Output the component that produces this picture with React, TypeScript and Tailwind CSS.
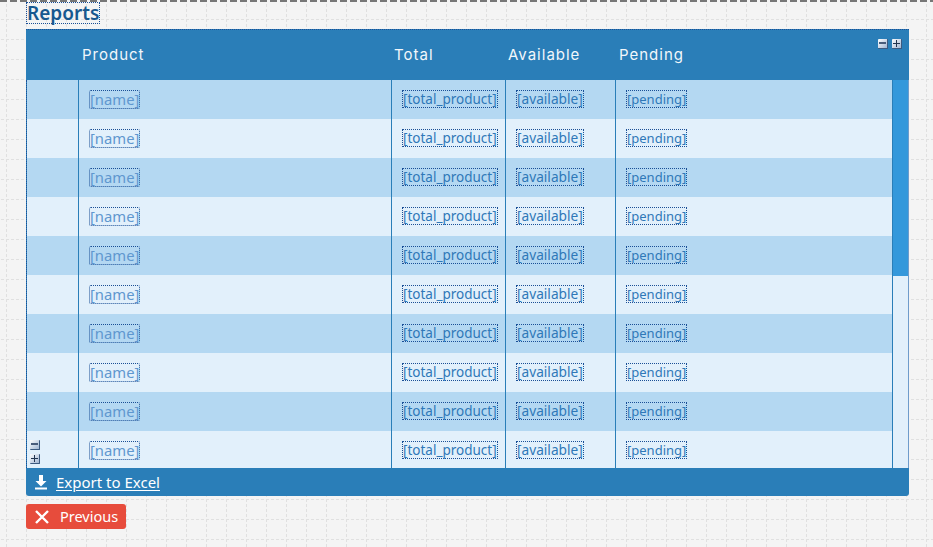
const ROWS = Array.from({ length: 10 }, (_, i) => i);

function GridBackground() {
  return (
    <svg className="absolute inset-0 h-full w-full" aria-hidden="true">
      <defs>
        <pattern id="grid" x="6" y="-1" width="20" height="20" patternUnits="userSpaceOnUse">
          <path d="M0 0H20" stroke="#e0e0e0" strokeWidth="1" strokeDasharray="3 2" transform="translate(0 .5)" />
          <path d="M0 0V20" stroke="#e0e0e0" strokeWidth="1" strokeDasharray="3 2" transform="translate(.5 0)" />
        </pattern>
      </defs>
      <rect width="100%" height="100%" fill="url(#grid)" />
    </svg>
  );
}

function Tool({ plus }: { plus?: boolean }) {
  return (
    <span className="relative block h-[10px] w-[10px] rounded-[1px] border-r border-b border-[#3d5a80] bg-gradient-to-br from-white to-[#a3b6d2]">
      {plus ? (
        <>
          <span className="absolute left-[1px] right-[1px] top-[4px] h-[1px] bg-[#22344f]" />
          <span className="absolute top-[1px] bottom-[1px] left-[4px] w-[1px] bg-[#22344f]" />
        </>
      ) : (
        <span className="absolute left-[1px] right-[1px] top-[3px] h-[2px] bg-[#4a5c7a]" />
      )}
    </span>
  );
}

function Field({ text, className }: { text: string; className: string }) {
  return <span className={`inline-block border border-dotted border-[#1a4f96] ${className}`}>{text}</span>;
}

export default function App() {
  return (
    <div className="relative h-[547px] w-[933px] overflow-hidden bg-[#f4f4f4] font-['Noto_Sans',sans-serif]">
      <GridBackground />
      <div className="relative">
        <div className="h-[2px] bg-[repeating-linear-gradient(90deg,#777_0_7px,transparent_7px_10px)]" />
        <div className="pl-[26px]">
          <h1 className="h-[22px] w-[74px] border border-dotted border-[#1a4f96] text-center text-[19px] font-semibold leading-[20px] text-[#17588f]">
            Reports
          </h1>

          <div className="mt-[5px] w-[883px] rounded-b-[3px] border-t border-dotted border-t-[#1a4f96] bg-[#2a7eb8]">
            <div className="relative flex h-[50px] items-center pt-[1px] font-['Inter',sans-serif] text-[15px] tracking-[1px] text-[#f2f7fb]">
              <span className="ml-[56px] w-[312px]">Product</span>
              <span className="w-[114px]">Total</span>
              <span className="w-[111px]">Available</span>
              <span>Pending</span>
              <div className="absolute right-[7px] top-[9px] flex gap-[4px]">
                <Tool />
                <Tool plus />
              </div>
            </div>

            <div className="flex h-[388px] overflow-hidden border-x border-l-[#1a4f96] border-r-[#6f9ccb] [border-style:none_solid_none_dotted]">
              <div className="min-w-0 flex-1 overflow-hidden">
                {ROWS.map((i) => (
                  <div key={i} className={`flex h-[39px] shrink-0 ${i % 2 === 0 ? "bg-[#b4d8f2]" : "bg-[#e2f0fb]"}`}>
                    <div className="relative w-[52px] shrink-0 border-r border-[#2a7eb8]">
                      {i === 9 && (
                        <div className="absolute left-[3px] top-[9px] flex flex-col gap-[4px]">
                          <Tool />
                          <Tool plus />
                        </div>
                      )}
                    </div>
                    <div className="flex w-[313px] shrink-0 items-start border-r border-[#2a7eb8] pl-[10px] pt-[10px]">
                      <Field text="[name]" className="h-[19px] rounded-[2px] text-[14.8px] leading-[17px] text-[#5f97cf]" />
                    </div>
                    <div className="flex w-[114px] shrink-0 items-start border-r border-[#2a7eb8] pl-[10px] pt-[10px]">
                      <Field text="[total_product]" className="h-[18px] text-[13.5px] leading-[16px] text-[#2f78b8]" />
                    </div>
                    <div className="flex w-[110px] shrink-0 items-start border-r border-[#2a7eb8] pl-[10px] pt-[10px]">
                      <Field text="[available]" className="h-[18px] text-[13.7px] leading-[16px] text-[#2f78b8]" />
                    </div>
                    <div className="flex flex-1 items-start pl-[10px] pt-[10px]">
                      <Field text="[pending]" className="h-[18px] text-[13px] leading-[16px] text-[#2f78b8]" />
                    </div>
                  </div>
                ))}
              </div>
              <div className="w-[16px] shrink-0 border-l border-[#2a7eb8] bg-[#e2f0fb]">
                <div className="h-[196px] bg-[#3498db]" />
              </div>
            </div>

            <div className="flex h-[28px] items-center pl-[7px] text-[15px] text-white">
              <svg className="h-[16px] w-[16px]" viewBox="0 0 16 16" fill="white" aria-hidden="true">
                <path d="M6 1h4v6h3.5L8 12.5 2.5 7H6z" />
                <rect x="2" y="13.5" width="12" height="2" />
              </svg>
              <a className="ml-[7px] underline underline-offset-2">Export to Excel</a>
            </div>
          </div>

          <button className="mt-[8px] flex h-[25px] w-[100px] items-center rounded-[3px] bg-[#e74c3c] pl-[8px] text-[14.5px] text-white">
            <svg className="h-[16px] w-[16px]" viewBox="0 0 16 16" stroke="white" strokeWidth="2.4" aria-hidden="true">
              <path d="M2 2l12 12M14 2L2 14" />
            </svg>
            <span className="ml-[10px]">Previous</span>
          </button>
        </div>
      </div>
    </div>
  );
}
